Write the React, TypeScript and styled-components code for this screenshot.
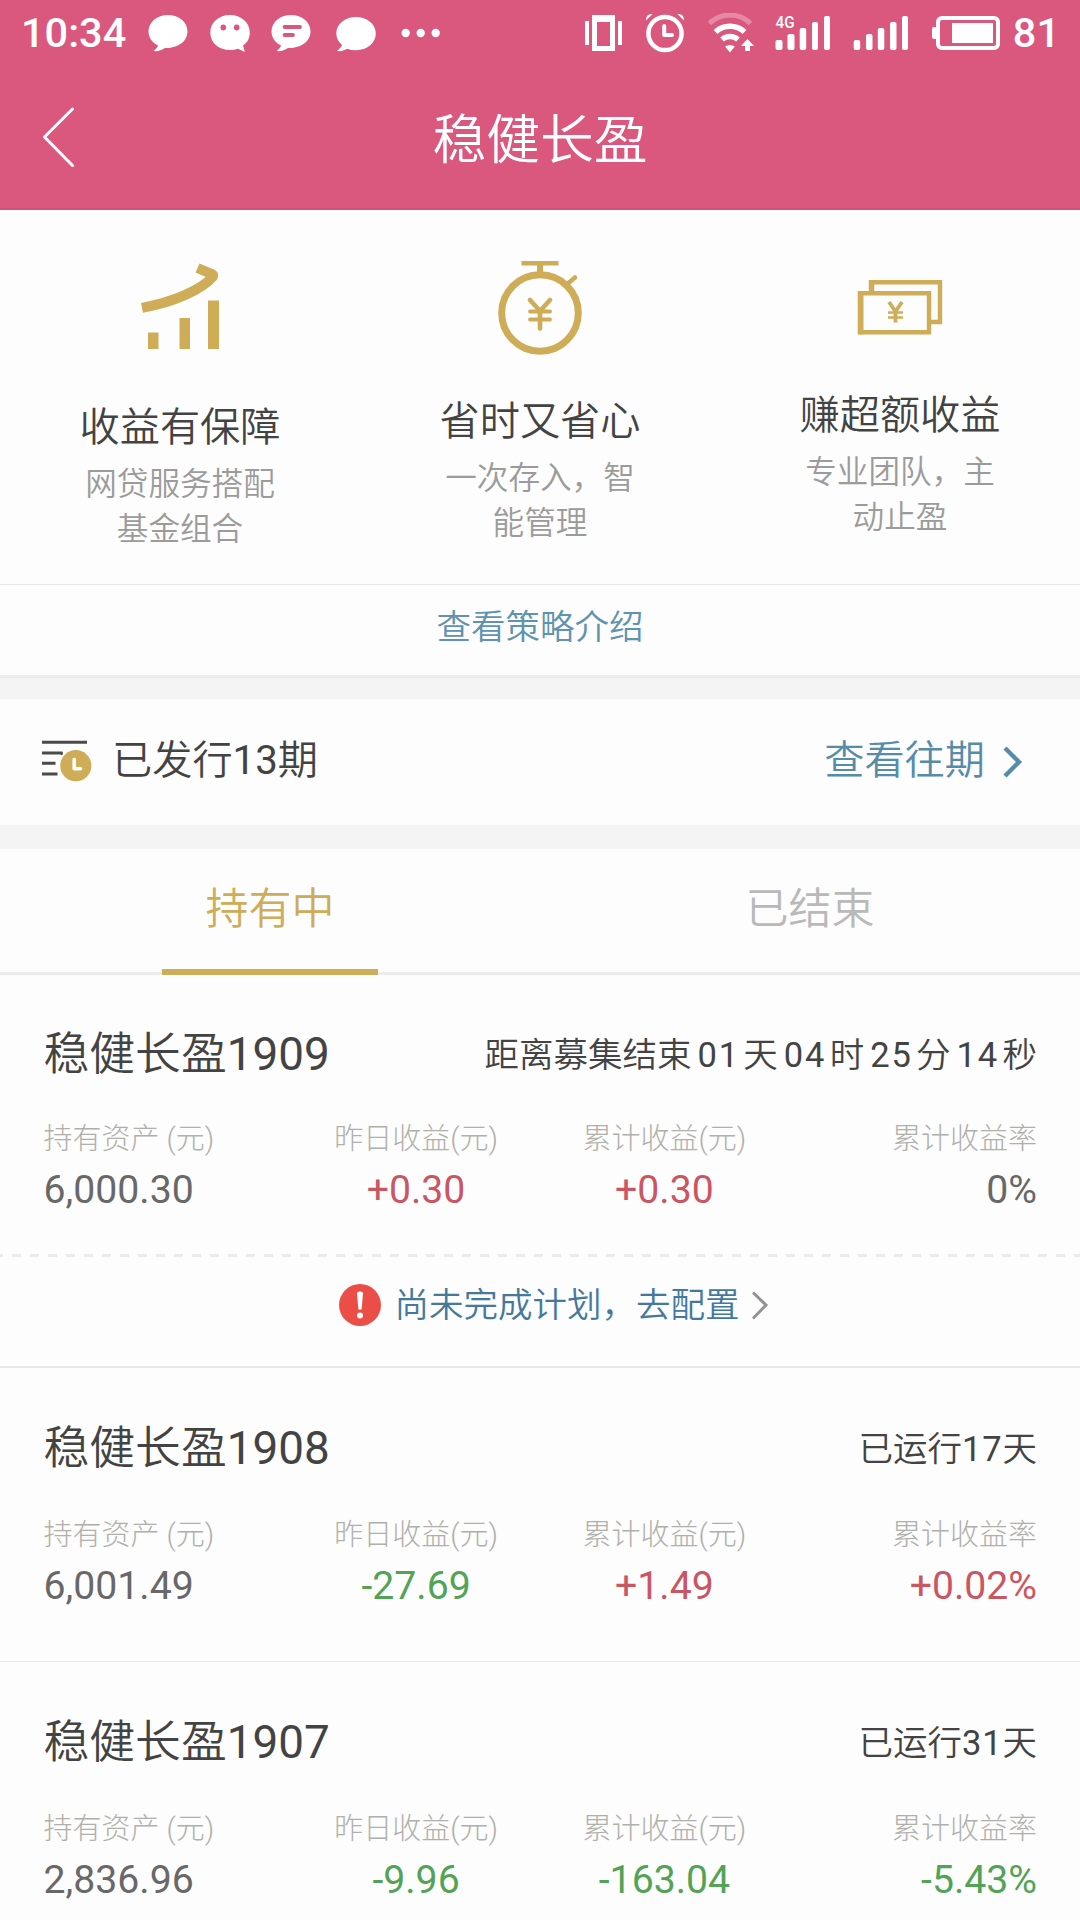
import React from "react";
import styled, { createGlobalStyle } from "styled-components";

const GOLD = "#cfac58";
const BLUE = "#568ca9";

const GlobalStyle = createGlobalStyle`
  * { box-sizing: border-box; }
  body {
    margin: 0;
    background: #fdfdfd;
    font-family: Roboto, "Noto Sans CJK SC", sans-serif;
    font-weight: 350;
    color: #434343;
  }
  svg { display: block; flex: none; }
`;

const Screen = styled.div`
  width: 1080px;
  height: 1920px;
  overflow: hidden;
  background: #fdfdfd;
`;

const Header = styled.header`
  height: 210px;
  background: #da587e;
  border-bottom: 2px solid #d1527a;
  color: #fff;
`;

const StatusBar = styled.div`
  height: 66px;
  padding: 0 20px 0 21px;
  display: flex;
  align-items: center;
  justify-content: space-between;
`;

const StatusGroup = styled.div`
  display: flex;
  align-items: center;
`;

const StatusText = styled.span`
  font-size: 41.5px;
  line-height: 66px;
  font-weight: 500;
`;

const NavBar = styled.div`
  height: 142px;
  padding: 0 40px;
  display: grid;
  grid-template-columns: 40px 1fr 40px;
  align-items: center;
`;

const NavTitle = styled.h1`
  margin: 0;
  padding-top: 8px;
  text-align: center;
  font-size: 53.8px;
  line-height: 80px;
  font-weight: 350;
`;

const Features = styled.section`
  height: 374px;
  display: grid;
  grid-template-columns: repeat(3, 1fr);
`;

const Feature = styled.div`
  display: flex;
  flex-direction: column;
  align-items: center;
  padding-top: 50px;
  text-align: center;
`;

const FeatureTitle = styled.h2<{ $gap: number }>`
  margin: ${(p) => p.$gap}px 0 0;
  font-size: 40.2px;
  line-height: 60px;
  font-weight: inherit;
`;

const FeatureText = styled.p`
  margin: 4px 0 0;
  width: 200px;
  font-size: 31.6px;
  line-height: 45px;
  color: #9b9b9b;
`;

const StrategyLink = styled.a`
  height: 91px;
  padding-bottom: 6px;
  display: flex;
  align-items: center;
  justify-content: center;
  border-top: 1px solid #e7e7e7;
  font-size: 34.5px;
  line-height: 50px;
  color: #5f93af;
`;

const Band = styled.div<{ $edge?: boolean }>`
  height: 24px;
  background: #f4f4f4;
  border-top: ${(p) => (p.$edge ? "3px solid #ececec" : "none")};
`;

const IssueRow = styled.div`
  height: 126px;
  padding: 0 57px 2px 42px;
  display: flex;
  align-items: center;
  justify-content: space-between;
  font-size: 40.2px;
  line-height: 60px;
`;

const IssueInfo = styled.div`
  display: flex;
  align-items: center;
  gap: 20px;
`;

const IssueLink = styled.a`
  display: flex;
  align-items: center;
  gap: 18px;
  color: ${BLUE};
`;

const Tabs = styled.div`
  height: 126px;
  display: grid;
  grid-template-columns: 1fr 1fr;
  border-bottom: 3px solid #ececec;
`;

const Tab = styled.div<{ $active?: boolean }>`
  height: 126px;
  display: flex;
  flex-direction: column;
  align-items: center;
  justify-content: space-between;
  padding-top: 30px;
  font-size: 43px;
  line-height: 60px;
  color: ${(p) => (p.$active ? GOLD : "#b9b9b9")};
`;

const TabBar = styled.div`
  width: 216px;
  height: 6px;
  background: ${GOLD};
`;

const Card = styled.section<{ $border: number }>`
  border-bottom: ${(p) => p.$border}px solid #e8e8e8;
`;

const CardBody = styled.div<{ $top: number; $bottom: number }>`
  padding: ${(p) => p.$top}px 43px ${(p) => p.$bottom}px 43.5px;
`;

const CardHead = styled.div`
  display: flex;
  align-items: center;
  justify-content: space-between;
  height: 60px;
`;

const CardTitle = styled.h3`
  margin: 0;
  padding-top: 2px;
  font-size: 45.8px;
  line-height: 60px;
  font-weight: inherit;
`;

const CardStatus = styled.div`
  padding-top: 2px;
  font-size: 34.5px;
  line-height: 60px;
  white-space: nowrap;
`;

const Digits = styled.span`
  font-weight: 400;
`;

const Days = styled(Digits)`
  letter-spacing: 0.8px;
`;

const Count = styled(Digits)`
  letter-spacing: 1.8px;
  padding: 0 3.5px 0 6px;
`;

const Metrics = styled.div<{ $gap: number }>`
  margin-top: ${(p) => p.$gap}px;
  display: grid;
  grid-template-columns: repeat(4, 1fr);
`;

const Metric = styled.div<{ $align: string }>`
  text-align: ${(p) => p.$align};
  white-space: nowrap;
`;

const MetricLabel = styled.div`
  font-size: 29px;
  line-height: 40px;
  font-weight: 300;
  color: #b0b0ab;
`;

const MetricValue = styled.div<{ $tone: Tone }>`
  margin-top: 6px;
  font-size: 39.2px;
  line-height: 50px;
  font-weight: 400;
  color: ${(p) => ({ plain: "#686868", up: "#cb5663", down: "#52a355" })[p.$tone]};
`;

const Dashes = styled.div`
  height: 3px;
  background: repeating-linear-gradient(
      90deg,
      transparent 0 9px,
      #ebebeb 9px 18px
    )
    3px 0;
`;

const Notice = styled.a`
  height: 109px;
  padding: 0 0 14px 27px;
  display: flex;
  align-items: center;
  justify-content: center;
  font-size: 34.5px;
  line-height: 50px;
  color: #44799e;
`;

const NoticeText = styled.span`
  margin: 0 11px 0 14px;
`;

type Tone = "plain" | "up" | "down";

const BubbleIcon = ({ kind }: { kind: "plain" | "face" | "lines" | "low" }) => (
  <svg width="40" height="38" viewBox="0 0 40 38" fill="#fff">
    {kind === "plain" && (
      <path d="M20 1C9 1 0.5 8.300 0.500 17.500C0.500 23.500 4 28.500 10 31.500C9.500 33.500 8 35 5.500 37C10 37.500 13.500 36.500 17 34C29 34.500 39.500 28 39.500 17.500C39.500 8 31 1 20 1Z" />
    )}
    {kind === "lines" && (
      <>
        <path d="M20 1C9 1 0.5 8.300 0.500 17.500C0.500 23.500 4 28.500 10 31.500C9.500 33.500 8 35 5.500 37C10 37.500 13.500 36.500 17 34C29 34.500 39.500 28 39.500 17.500C39.500 8 31 1 20 1Z" />
        <path d="M13.500 13H29M13.500 21H22" stroke="#da587e" strokeWidth="3.800" strokeLinecap="round" />
      </>
    )}
    {kind === "face" && (
      <>
        <path d="M20 1C9 1 0.3 8.500 0.300 18.500C0.300 29 9 36 20 36C23 36 25.500 35.700 28 34.800L34.800 38L33 31.500C37.500 28.500 39.800 24 39.800 18.500C39.800 8.500 31 1 20 1Z" />
        <ellipse cx="13.300" cy="13.500" rx="2.800" ry="3" fill="#da587e" />
        <ellipse cx="26.700" cy="13.500" rx="2.800" ry="3" fill="#da587e" />
      </>
    )}
    {kind === "low" && (
      <path d="M20 3C9 3 0.300 10 0.300 19.500C0.300 24 2.500 28 6 31C5 33.500 3.500 35 1 37C5 37.500 8 36.700 11 34.700C14 35.700 17 36.200 20 36.200C31 36.200 39.800 29 39.800 19.500C39.800 10 31 3 20 3Z" />
    )}
  </svg>
);

const Bubbles = styled(StatusGroup)`
  margin-left: 22px;
  gap: 21.5px;
`;

const Overflow = styled(StatusGroup)`
  margin-left: 3px;
  gap: 25px;
`;

const MoreDots = () => (
  <svg width="40" height="10" viewBox="0 0 40 10" fill="#fff">
    <circle cx="4.700" cy="5" r="4.200" />
    <circle cx="19.700" cy="5" r="4.200" />
    <circle cx="34.700" cy="5" r="4.200" />
  </svg>
);

const StatusIcons = () => (
  <svg width="420" height="40" viewBox="584 13 420 40" fill="#fff">
    <path d="M585 21h4v24h-4zM618 21h4v24h-4z" />
    <path fillRule="evenodd" d="M592 15h23v36h-23zM597 22v24h13v-24z" />

    <circle cx="665" cy="33.500" r="16.600" fill="none" stroke="#fff" strokeWidth="4.500" />
    <path d="M664.200 26V35H672" fill="none" stroke="#fff" strokeWidth="4" strokeLinecap="round" strokeLinejoin="round" />
    <path d="M646 20.500C646 16 648 14 652.500 14ZM684 20.500C684 16 682 14 677.500 14Z" />

    <g fill="none" stroke="#fff">
      <path d="M709.500 23.500A29 29 0 0 1 750.500 23.500" strokeWidth="5" opacity="0.300" />
      <path d="M715.500 32A21.500 21.500 0 0 1 744.500 32" strokeWidth="5.500" />
      <path d="M722 39.500A12.500 12.500 0 0 1 738 39.500" strokeWidth="5.500" />
    </g>
    <path d="M725 46.500Q730 43.500 734.800 46.500L730 52.500Z" />
    <path d="M747.500 39L754 46H750V51H745V46H741Z" />

    <rect x="775.500" y="40" width="7" height="10" rx="2" />
    <rect x="787.500" y="34" width="7" height="16" rx="2" />
    <rect x="799.700" y="28" width="6.500" height="22" rx="2" />
    <rect x="812" y="22" width="6" height="28" rx="2" />
    <rect x="824" y="16" width="6" height="34" rx="2" />
    <text x="775.500" y="28" fontSize="16.500" fontWeight="500" textLength="19" lengthAdjust="spacingAndGlyphs">4G</text>

    <rect x="853.700" y="40" width="6.500" height="10" rx="2" />
    <rect x="866" y="34" width="6.500" height="16" rx="2" />
    <rect x="877.800" y="28" width="6.500" height="22" rx="2" />
    <rect x="890" y="22" width="6.500" height="28" rx="2" />
    <rect x="902" y="16" width="6" height="34" rx="2" />

    <rect x="938" y="18" width="60" height="30" rx="4" fill="none" stroke="#fff" strokeWidth="4" />
    <rect x="932" y="27" width="5" height="12" rx="2" />
    <rect x="952" y="23" width="41" height="20" />
  </svg>
);

const BatteryLevel = styled(StatusText)`
  margin-left: 9px;
`;

const BackIcon = () => (
  <svg width="40" height="62" viewBox="40 106 40 62" fill="none" stroke="#fff" strokeWidth="3" strokeLinecap="round" strokeLinejoin="round">
    <path d="M72.500 109L44.500 137L72.500 165.500" />
  </svg>
);

const GrowthIcon = () => (
  <svg width="84" height="96" viewBox="138 260 84 96" fill={GOLD}>
    <path d="M148 332.500h10.500v16.500h-10.500zM179.500 318h10.500v31h-10.500zM208 300.500h11v48.500h-11z" />
    <path d="M142 307.800C174 302 202 289.500 213 276.500Q213.500 275 212 274.200L197.500 268" fill="none" stroke={GOLD} strokeWidth="10" strokeLinejoin="round" />
  </svg>
);

const StopwatchIcon = () => (
  <svg width="88" height="96" viewBox="496 260 88 96" fill="none" stroke={GOLD}>
    <circle cx="540" cy="313" r="38.300" strokeWidth="7" />
    <path d="M521.500 263.200H558.500" strokeWidth="4.400" />
    <path d="M540 264V275" strokeWidth="6" />
    <path d="M568.500 283L575 277.500" strokeWidth="4.500" strokeLinecap="round" />
    <path d="M530 300L540 311L550 300M540 311V328.500" strokeWidth="4.600" strokeLinecap="round" strokeLinejoin="round" />
    <path d="M530 311.500H550M530 319.500H550" strokeWidth="3.800" strokeLinecap="round" />
  </svg>
);

const NotesIcon = () => (
  <svg width="88" height="96" viewBox="856 260 88 96" fill="none" stroke={GOLD}>
    <path d="M871.500 292V282.200H940V322H930" strokeWidth="4.400" />
    <path d="M871.500 280V292" strokeWidth="5.500" />
    <path d="M860 293.200H929V332.200H860Z" strokeWidth="4.400" />
    <path d="M860.700 291V334.400" strokeWidth="5.600" />
    <path d="M889 302L895.500 311.500L902 302M895.500 311V322.500" strokeWidth="3.800" />
    <path d="M888 312.500H903M888 317.500H903" strokeWidth="2.400" />
  </svg>
);

const ScheduleIcon = () => (
  <svg width="50" height="42" viewBox="42 740 50 42">
    <path d="M42 742.300H87M42 753H62.500L60.500 754M42 763.300H55.500M42 774H57.500" fill="none" stroke="#4a4a4a" strokeWidth="3" />
    <circle cx="75.800" cy="765.700" r="15.600" fill={GOLD} />
    <path d="M74.200 759.500V768.800H80.500" fill="none" stroke="#fff" strokeWidth="3.600" strokeLinejoin="round" strokeLinecap="round" />
  </svg>
);

const IssueChevron = () => (
  <svg width="20" height="34" viewBox="0 0 20 34" fill="none" stroke={BLUE} strokeWidth="4.400">
    <path d="M2 4L16 18L2 32" />
  </svg>
);

const NoticeChevron = () => (
  <svg width="18" height="30" viewBox="0 0 18 30" fill="none" stroke="#939393" strokeWidth="3">
    <path d="M2 2.500L15 15L2 28.500" />
  </svg>
);

const AlertIcon = () => (
  <svg width="42" height="42" viewBox="0 0 42 42">
    <circle cx="21" cy="21" r="21" fill="#ea4e46" />
    <path d="M18 9.500Q18 7.500 21 7.500Q24 7.500 24 9.500L22.600 25.500H19.400Z" fill="#fff" />
    <circle cx="21" cy="31.500" r="3" fill="#fff" />
  </svg>
);

const features = [
  { icon: <GrowthIcon />, gap: 42, title: "收益有保障", text: ["网贷服务搭配", "基金组合"] },
  { icon: <StopwatchIcon />, gap: 36, title: "省时又省心", text: ["一次存入，智", "能管理"] },
  { icon: <NotesIcon />, gap: 30, title: "赚超额收益", text: ["专业团队，主", "动止盈"] },
];

const labels = ["持有资产 (元)", "昨日收益(元)", "累计收益(元)", "累计收益率"];
const aligns = ["left", "center", "center", "right"];

const toneOf = (v: string): Tone =>
  v.startsWith("+") ? "up" : v.startsWith("-") ? "down" : "plain";

const MetricGrid = ({ values, gap }: { values: string[]; gap: number }) => (
  <Metrics $gap={gap}>
    {values.map((v, i) => (
      <Metric key={labels[i]} $align={aligns[i]}>
        <MetricLabel>{labels[i]}</MetricLabel>
        <MetricValue $tone={toneOf(v)}>{v}</MetricValue>
      </Metric>
    ))}
  </Metrics>
);

const running = [
  { issue: "1908", days: "17", values: ["6,001.49", "-27.69", "+1.49", "+0.02%"] },
  { issue: "1907", days: "31", values: ["2,836.96", "-9.96", "-163.04", "-5.43%"] },
];

export default function App() {
  return (
    <Screen>
      <GlobalStyle />
      <Header>
        <StatusBar>
          <StatusGroup>
            <StatusText>10:34</StatusText>
            <Bubbles>
              <BubbleIcon kind="plain" />
              <BubbleIcon kind="face" />
              <BubbleIcon kind="lines" />
              <Overflow>
                <BubbleIcon kind="low" />
                <MoreDots />
              </Overflow>
            </Bubbles>
          </StatusGroup>
          <StatusGroup>
            <StatusIcons />
            <BatteryLevel>81</BatteryLevel>
          </StatusGroup>
        </StatusBar>
        <NavBar>
          <BackIcon />
          <NavTitle>稳健长盈</NavTitle>
        </NavBar>
      </Header>

      <Features>
        {features.map((f) => (
          <Feature key={f.title}>
            {f.icon}
            <FeatureTitle $gap={f.gap}>{f.title}</FeatureTitle>
            <FeatureText>
              {f.text[0]}
              <br />
              {f.text[1]}
            </FeatureText>
          </Feature>
        ))}
      </Features>
      <StrategyLink>查看策略介绍</StrategyLink>
      <Band $edge />
      <IssueRow>
        <IssueInfo>
          <ScheduleIcon />
          <span>
            已发行<Digits>13</Digits>期
          </span>
        </IssueInfo>
        <IssueLink>
          <span>查看往期</span>
          <IssueChevron />
        </IssueLink>
      </IssueRow>
      <Band />
      <Tabs>
        <Tab $active>
          持有中
          <TabBar />
        </Tab>
        <Tab>已结束</Tab>
      </Tabs>

      <Card $border={2}>
        <CardBody $top={49} $bottom={39}>
          <CardHead>
            <CardTitle>
              稳健长盈<Digits>1909</Digits>
            </CardTitle>
            <CardStatus>
              距离募集结束<Count>01</Count>天<Count>04</Count>时<Count>25</Count>分<Count>14</Count>秒
            </CardStatus>
          </CardHead>
          <MetricGrid gap={35} values={["6,000.30", "+0.30", "+0.30", "0%"]} />
        </CardBody>
        <Dashes />
        <Notice>
          <AlertIcon />
          <NoticeText>尚未完成计划，去配置</NoticeText>
          <NoticeChevron />
        </Notice>
      </Card>
      {running.map((r) => (
        <Card key={r.issue} $border={1}>
          <CardBody $top={50} $bottom={50}>
            <CardHead>
              <CardTitle>
                稳健长盈<Digits>{r.issue}</Digits>
              </CardTitle>
              <CardStatus>
                已运行<Days>{r.days}</Days>天
              </CardStatus>
            </CardHead>
            <MetricGrid gap={37} values={r.values} />
          </CardBody>
        </Card>
      ))}
    </Screen>
  );
}
